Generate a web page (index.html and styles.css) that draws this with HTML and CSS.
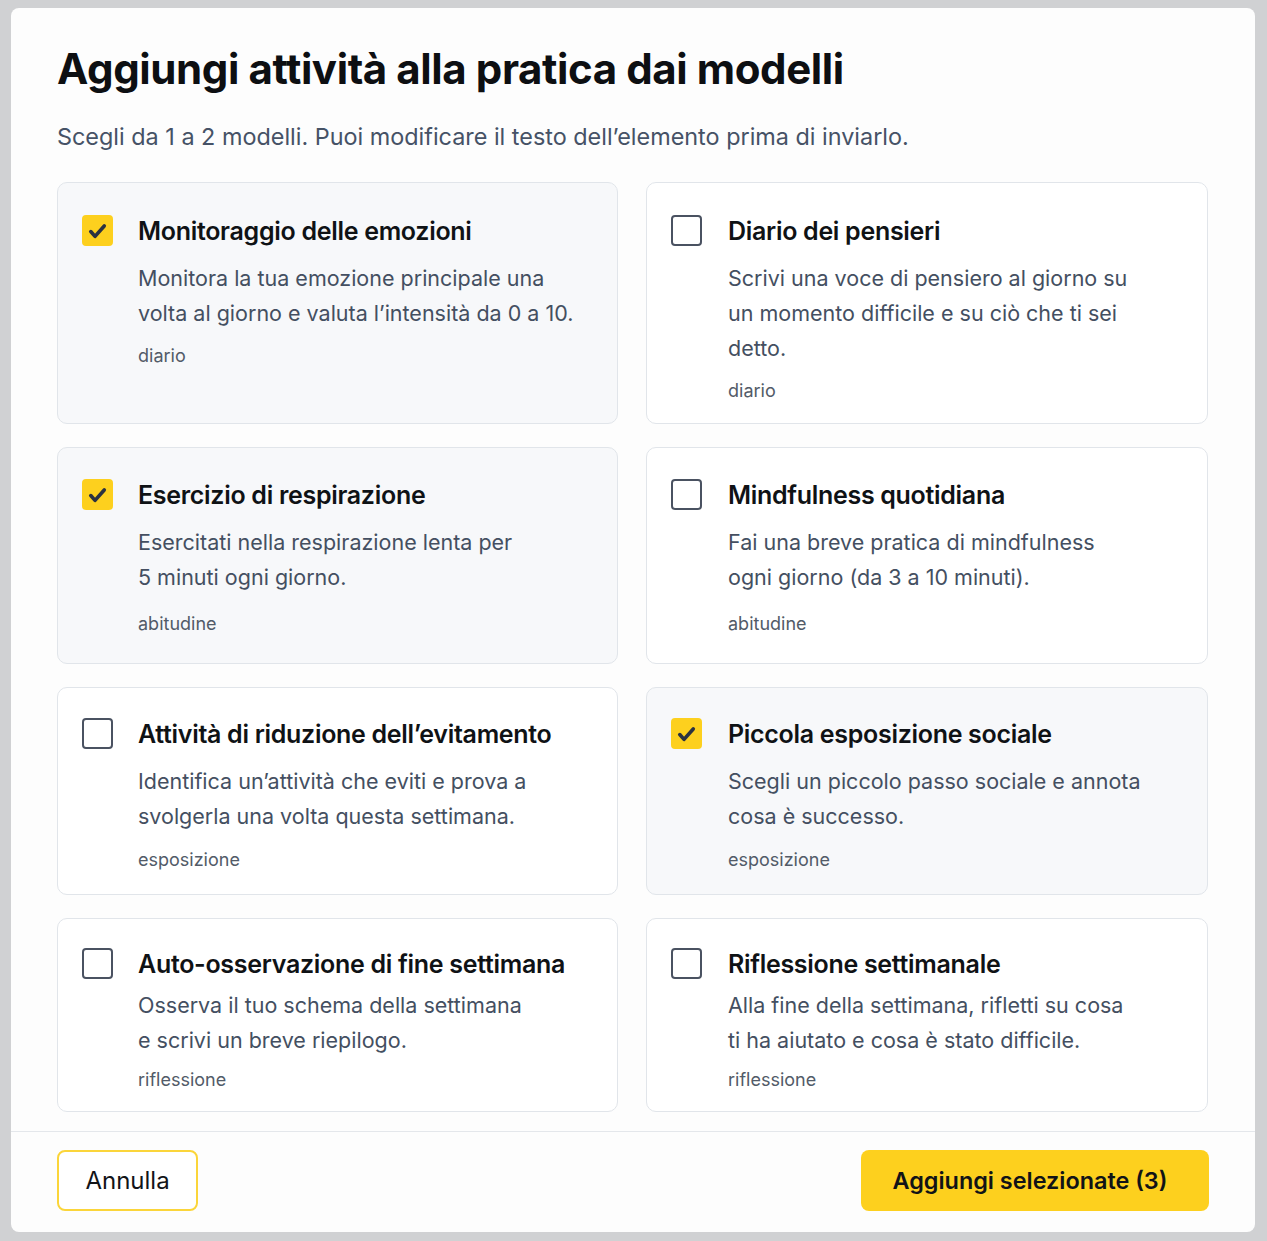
FILE: index.html
```html
<!DOCTYPE html>
<html lang="it">
<head>
<meta charset="utf-8">
<title>Aggiungi attività</title>
<link rel="stylesheet" href="styles.css">
</head>
<body>
<div class="modal">
  <div class="body">
    <h1 class="title">Aggiungi attività alla pratica dai modelli</h1>
    <p class="subtitle">Scegli da 1 a 2 modelli. Puoi modificare il testo dell’elemento prima di inviarlo.</p>
    <div class="grid">
      <label class="card top selected">
        <span class="check on"><svg viewBox="0 0 24 24"><path d="M6 12.5l3.8 4.3L18 7.5"/></svg></span>
        <span class="content">
          <span class="name">Monitoraggio delle emozioni</span>
          <span class="desc">Monitora la tua emozione principale una<br>volta al giorno e valuta l’intensità da 0 a 10.</span>
          <span class="tag">diario</span>
        </span>
      </label>
      <label class="card top">
        <span class="check"></span>
        <span class="content">
          <span class="name">Diario dei pensieri</span>
          <span class="desc">Scrivi una voce di pensiero al giorno su<br>un momento difficile e su ciò che ti sei<br>detto.</span>
          <span class="tag">diario</span>
        </span>
      </label>
      <label class="card selected">
        <span class="check on"><svg viewBox="0 0 24 24"><path d="M6 12.5l3.8 4.3L18 7.5"/></svg></span>
        <span class="content">
          <span class="name">Esercizio di respirazione</span>
          <span class="desc">Esercitati nella respirazione lenta per<br>5 minuti ogni giorno.</span>
          <span class="tag">abitudine</span>
        </span>
      </label>
      <label class="card">
        <span class="check"></span>
        <span class="content">
          <span class="name">Mindfulness quotidiana</span>
          <span class="desc">Fai una breve pratica di mindfulness<br>ogni giorno (da 3 a 10 minuti).</span>
          <span class="tag">abitudine</span>
        </span>
      </label>
      <label class="card mid">
        <span class="check"></span>
        <span class="content">
          <span class="name">Attività di riduzione dell’evitamento</span>
          <span class="desc">Identifica un’attività che eviti e prova a<br>svolgerla una volta questa settimana.</span>
          <span class="tag">esposizione</span>
        </span>
      </label>
      <label class="card mid selected">
        <span class="check on"><svg viewBox="0 0 24 24"><path d="M6 12.5l3.8 4.3L18 7.5"/></svg></span>
        <span class="content">
          <span class="name">Piccola esposizione sociale</span>
          <span class="desc">Scegli un piccolo passo sociale e annota<br>cosa è successo.</span>
          <span class="tag">esposizione</span>
        </span>
      </label>
      <label class="card compact">
        <span class="check"></span>
        <span class="content">
          <span class="name">Auto-osservazione di fine settimana</span>
          <span class="desc">Osserva il tuo schema della settimana<br>e scrivi un breve riepilogo.</span>
          <span class="tag">riflessione</span>
        </span>
      </label>
      <label class="card compact">
        <span class="check"></span>
        <span class="content">
          <span class="name">Riflessione settimanale</span>
          <span class="desc">Alla fine della settimana, rifletti su cosa<br>ti ha aiutato e cosa è stato difficile.</span>
          <span class="tag">riflessione</span>
        </span>
      </label>
    </div>
  </div>
  <div class="footer">
    <button class="btn secondary">Annulla</button>
    <button class="btn primary">Aggiungi selezionate (3)</button>
  </div>
</div>
</body>
</html>
```
FILE: styles.css
```css
* { box-sizing: border-box; }
html, body { margin: 0; }
body {
  background: #d0d1d3;
  padding: 8px 12px 9px 11px;
  font-family: "Inter", "Noto Sans", sans-serif;
  color: #111418;
}
.modal {
  background: #fdfdfd;
  border-radius: 8px;
  width: 1244px;
  height: 1224px;
  display: flex;
  flex-direction: column;
  overflow: hidden;
}
.body {
  flex: 1;
  padding: 35px 46px 0 46px;
}
.title {
  margin: 0;
  font-size: 42px;
  line-height: 52px;
  font-weight: 700;
  letter-spacing: -0.4px;
  color: #0d0f12;
}
.subtitle {
  margin: 26px 0 0 0;
  font-size: 23.4px;
  line-height: 32px;
  color: #465266;
}
.grid {
  margin-top: 29px;
  display: grid;
  grid-template-columns: 561px 562px;
  column-gap: 28px;
  row-gap: 23px;
}
.card {
  display: flex;
  gap: 26px;
  border: 1.5px solid #e1e5ea;
  border-radius: 10px;
  background: #fff;
  padding: 31px 24px 27px 24px;
}
.card:nth-child(odd) { gap: 25px; }
.card.selected { background: #f7f8fa; }
.card.top { padding-top: 32px; padding-bottom: 20px; }
.card.mid { padding-top: 30px; padding-bottom: 22px; }
.card.compact { padding-top: 29px; padding-bottom: 19px; }
.check {
  flex: none;
  width: 31px;
  height: 31px;
  border: 2px solid #4a5261;
  border-radius: 4px;
  background: #fff;
  display: flex;
  align-items: center;
  justify-content: center;
}
.check.on {
  background: #fdd01e;
  border-color: #fdd01e;
}
.check svg {
  width: 28px;
  height: 28px;
  fill: none;
  stroke: #2b3240;
  stroke-width: 3.2;
  stroke-linecap: round;
  stroke-linejoin: round;
}
.content {
  display: flex;
  flex-direction: column;
}
.name {
  font-size: 25px;
  line-height: 36px;
  font-weight: 600;
  letter-spacing: -0.3px;
  color: #0f1215;
  margin-top: -2px;
}
.desc {
  margin-top: 12px;
  font-size: 21.5px;
  line-height: 35px;
  color: #444f61;
}
.compact .desc { margin-top: 6px; }
.tag {
  margin-top: 17px;
  font-size: 18px;
  line-height: 24px;
  color: #525b68;
}
.top .tag { margin-top: 13px; }
.mid .tag { margin-top: 14px; }
.compact .tag { margin-top: 10px; }
.footer {
  border-top: 1.5px solid #e4e7eb;
  padding: 18px 46px 21px 46px;
  display: flex;
  justify-content: space-between;
}
.btn {
  height: 61px;
  border-radius: 8px;
  font-family: "Inter", "Noto Sans", sans-serif;
  font-size: 24px;
}
.btn.secondary {
  width: 141px;
  background: #fff;
  border: 2px solid #fbd53a;
  color: #121418;
  font-weight: 400;
}
.btn.primary {
  width: 348px;
  padding-right: 16px;
  background: #fdd01e;
  border: none;
  color: #111317;
  font-weight: 600;
  font-size: 23.4px;
}
```
